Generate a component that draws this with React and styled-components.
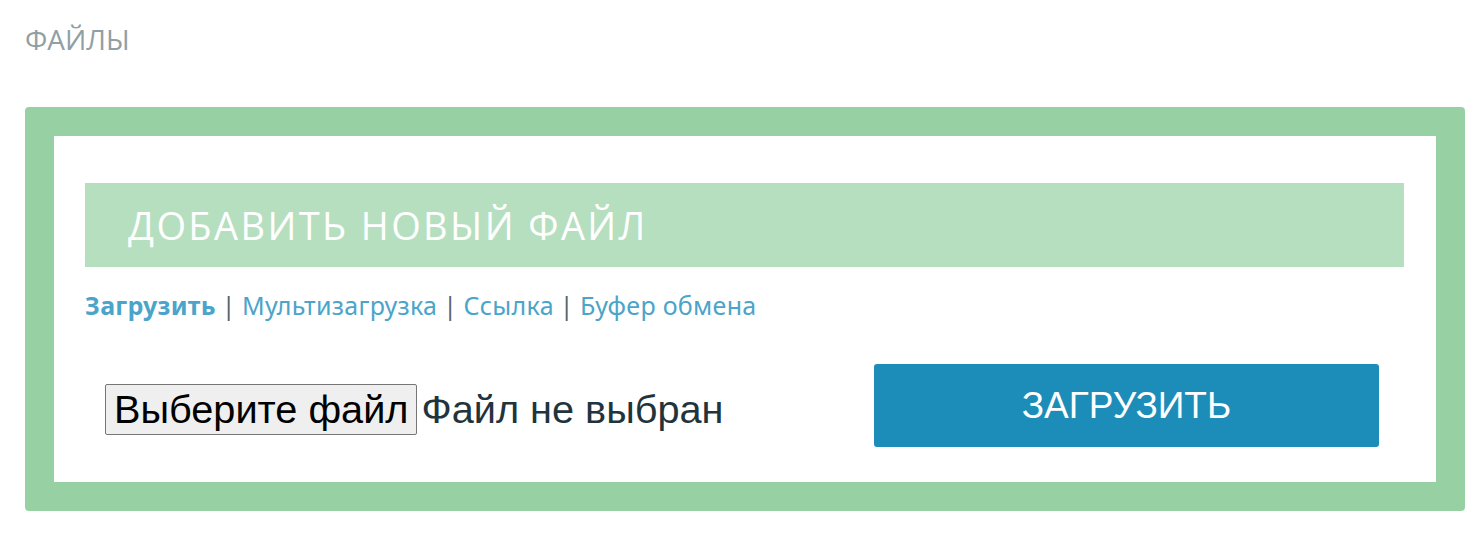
import React from "react";
import styled, { createGlobalStyle } from "styled-components";

const GlobalStyle = createGlobalStyle`
  body {
    margin: 0;
    background: #ffffff;
    font-family: "Open Sans", "Noto Sans", sans-serif;
  }
`;

const Page = styled.main`
  padding: 0 19px 0 25px;
`;

const PageTitle = styled.h2`
  margin: 0;
  padding-top: 20px;
  height: 107px;
  box-sizing: border-box;
  font-family: "Open Sans", sans-serif;
  font-weight: 400;
  font-size: 28px;
  line-height: 38px;
  color: #909fa4;
  text-transform: uppercase;
`;

const Frame = styled.section`
  border: 29px solid #97d1a3;
  border-radius: 4px;
  background: #ffffff;
  padding: 47px 32px 35px 31px;
`;

const Heading = styled.div`
  height: 84px;
  display: flex;
  align-items: center;
  padding-left: 43px;
  background: #b6dfc0;
  color: #ffffff;
  font-family: "Open Sans", sans-serif;
  font-size: 38px;
  letter-spacing: 2.4px;
  text-transform: uppercase;
`;

const Tabs = styled.nav`
  margin-top: 21px;
  font-family: "Noto Sans", sans-serif;
  font-size: 25px;
  line-height: 34px;
  letter-spacing: 0.3px;
  color: #5a646a;
`;

const Tab = styled.a`
  color: #4ba4c9;
  text-decoration: none;
  font-weight: ${(p) => (p.$active ? 700 : 400)};
  cursor: pointer;
`;

const Sep = styled.span`
  margin: 0 6px;
`;

const UploadRow = styled.div`
  margin-top: 42px;
  display: flex;
  align-items: center;
  justify-content: space-between;
  padding: 0 25px 0 20px;
`;

const FileField = styled.label`
  display: flex;
  align-items: center;
  gap: 4px;
  font-family: "Liberation Sans", Arial, sans-serif;
  font-size: 39.7px;
  cursor: pointer;

  input {
    display: none;
  }
`;

const PickButton = styled.span`
  display: inline-flex;
  align-items: center;
  height: 51px;
  box-sizing: border-box;
  padding: 0 8px;
  background: #efefef;
  border: 1px solid #767676;
  border-radius: 2px;
  color: #000000;
  margin-top: 7px;
`;

const FileStatus = styled.span`
  color: #1f343d;
  margin-top: 7px;
`;

const SubmitButton = styled.button`
  width: 505px;
  height: 83px;
  border: none;
  border-radius: 3px;
  background: #1c8cb9;
  color: #ffffff;
  font-family: "Liberation Sans", Arial, sans-serif;
  font-size: 37px;
  text-transform: uppercase;
  cursor: pointer;
`;

const tabs = ["Загрузить", "Мультизагрузка", "Ссылка", "Буфер обмена"];

export default function App() {
  return (
    <Page>
      <GlobalStyle />
      <PageTitle>Файлы</PageTitle>
      <Frame>
        <Heading>Добавить новый файл</Heading>
        <Tabs>
          {tabs.map((t, i) => (
            <React.Fragment key={t}>
              {i > 0 && <Sep>|</Sep>}
              <Tab $active={i === 0}>{t}</Tab>
            </React.Fragment>
          ))}
        </Tabs>
        <UploadRow>
          <FileField>
            <input type="file" />
            <PickButton>Выберите файл</PickButton>
            <FileStatus>Файл не выбран</FileStatus>
          </FileField>
          <SubmitButton>Загрузить</SubmitButton>
        </UploadRow>
      </Frame>
    </Page>
  );
}
